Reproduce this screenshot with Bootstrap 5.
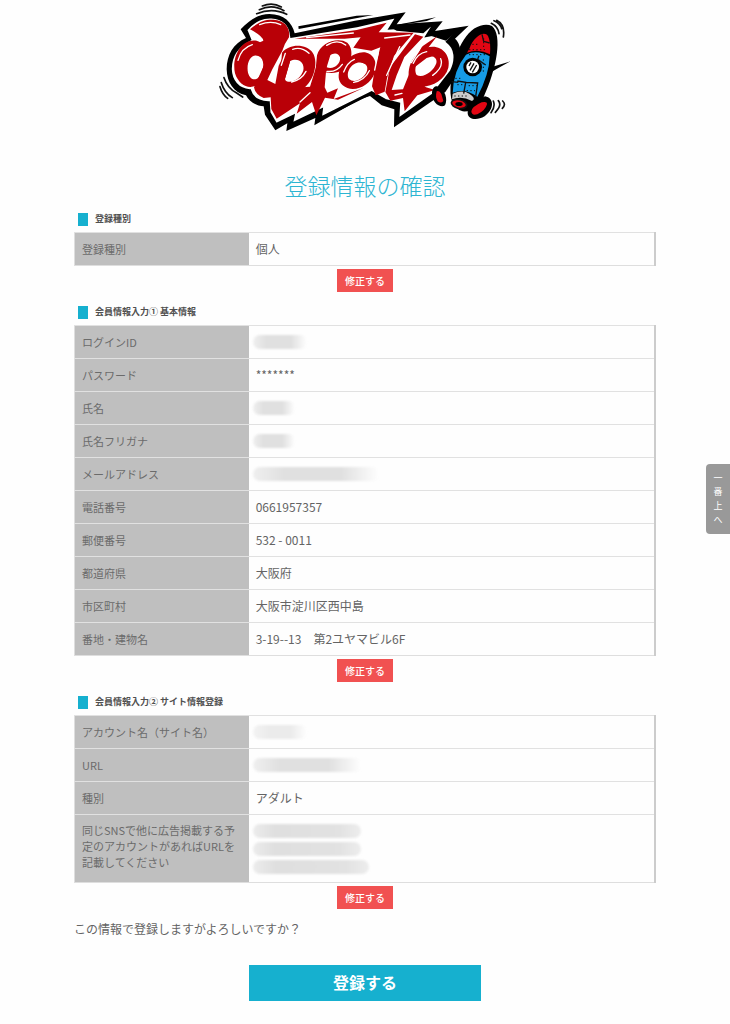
<!DOCTYPE html>
<html lang="ja">
<head>
<meta charset="utf-8">
<meta name="viewport" content="width=device-width, initial-scale=1">
<title>登録情報の確認</title>
<link rel="stylesheet" href="https://cdn.jsdelivr.net/npm/bootstrap@5.3.0/dist/css/bootstrap.min.css">
<style>
body{font-family:"Noto Sans CJK JP",sans-serif;font-size:12px;line-height:18px;color:#646464;background:#fefefe}
.page-body{width:80%;padding:0 1px}
.brand-logo{width:310px;height:140px}
.page-title{font-size:23px;line-height:32px;font-weight:300;color:#2db5d2;margin:29px 0 11px}
.section-title{font-size:9px;line-height:14px;font-weight:700;color:#505050;gap:7px;padding-left:4px;margin-bottom:6px}
.section-title::before{content:"";width:10px;height:13px;background:#16b0cf}
.info-table{width:100%;table-layout:fixed;border-collapse:collapse;border:1px solid #dedede;border-right:2px solid #ccc}
.info-table th{width:30%;background:#bfbfbf;color:#6b6b6b;font-size:11px;line-height:16px;font-weight:400;padding:8px 7px}
.info-table td{padding:7px 7px;line-height:18px}
.info-table tr{border-top:1px solid #e1e1e1}
.info-table .tall-row th{padding-top:7px;padding-bottom:12px}
.btn-fix{background:#f15151;color:#fff;border:0;border-radius:0;font-size:10px;line-height:15px;padding:4px 7px;width:56px;white-space:nowrap;font-weight:500}
.fix-row{margin:3px 0 13px}
.question{line-height:16px;margin-top:-1px}
.btn-send{width:40%;height:36px;background:#16b0cf;color:#fff;border:0;border-radius:0;font-size:16px;font-weight:700;line-height:24px;padding:3px 4px 5px}
.btn-fix:hover{background:#d94444;color:#fff}
.btn-send:hover{background:#119ab6;color:#fff}
.masked{display:block;height:14px;margin-left:-3px;border-radius:8px;background:linear-gradient(90deg,#efefef,#e0e0e0 25%,#e0e0e0 70%,#fefefe);filter:blur(1px)}
.masked.faint{background:linear-gradient(90deg,#f3f3f3,#ebebeb 30%,#ebebeb 70%,#fefefe)}
.masked.even{background:linear-gradient(90deg,#ececec,#dfdfdf 20%,#e2e2e2 80%,#ededed)}
.w-xs{width:42px}.w-sm{width:54px}.w-md{width:108px}.w-lg{width:116px}.w-xl{width:126px}
.to-top{position:fixed;right:0;top:464px;width:24px;height:70px;background:#999;color:#fff;border-radius:4px 0 0 4px;font-size:9px;line-height:14px;text-decoration:none}
</style>
</head>
<body>
<header class="text-center">
<svg class="brand-logo" viewBox="0 0 930 420" role="img" aria-label="appollo">
<path d="M92 88C125 53 152 42 178 42C222 42 246 67 254 100L435 62L587 37L560 73L698 64L675 93L776 77L735 116C755 132 757 178 744 220L706 276L552 382L553 328L515 316L480 288L450 298L313 376L316 354L229 393L232 370L196 391L165 344L161 319C137 318 116 303 108 286C70 278 51 247 50 208C50 165 70 130 108 114Z"/>
<path d="M265 79L440 47L490 45L266 87ZM574 72L678 52L650 63L586 73ZM835 204L901 184L865 204L838 220Z"/>
<path d="M107 89C137 56 160 50 184 51C223 53 242 77 245 109L440 77L563 49L541 84L671 75L652 106L748 88L713 125C739 144 741 180 724 214L669 285L563 360L566 312L525 301L485 278L331 355L334 330L244 373L249 349L198 374L177 338L175 308C145 307 125 294 119 272C83 270 62 242 61 209C60 169 82 137 119 118Z" fill="#fff" stroke="#000" stroke-width="9"/>
<path d="M668 75L640 100L600 96L560 92L545 84ZM748 88L708 122L664 108L690 97Z"/>
<g fill="#b90007">
<path d="M120 88C147 65 163 58 190 59C227 62 241 85 237 112Q224 130 217 152L187 208L172 240L196 252L206 197Q214 177 230 157L240 185L225 236L232 265L300 260L334 150L355 130L352 170L344 262L352 278L384 265L371 297L460 264L384 299L345 293L319 346L306 306L260 341L270 310L200 356L184 327L182 292L161 294Q136 284 132 262L165 190L160 160L143 130L160 122Q158 108 120 88Z"/>
<path fill-rule="evenodd" d="M140 122C175 132 180 190 160 232C140 276 90 268 75 220C64 170 95 114 140 122ZM145 168C123 159 108 188 114 218C122 246 145 243 154 218C164 196 161 174 145 168Z"/>
<path fill-rule="evenodd" d="M216 158C240 129 290 132 308 158C329 190 307 254 272 270C248 279 226 266 207 270ZM240 184L224 240C242 255 273 237 280 211C285 188 263 171 240 184Z"/>
<path fill-rule="evenodd" d="M321 166C331 128 383 109 412 128C434 149 425 195 398 211C378 221 358 220 345 216L336 250L310 280ZM361 166L350 202C372 210 393 191 390 172C386 157 369 158 361 166Z"/>
<path fill-rule="evenodd" d="M448 158C483 149 507 181 494 219C480 260 427 281 398 256C369 229 396 172 448 158ZM453 188C427 184 405 217 417 237C436 253 465 232 471 212C475 198 467 190 453 188Z"/>
<path d="M254 116L440 90L530 68L506 97L611 98L552 168L531 235L524 275L497 286L486 259L494 208L511 142L484 152L430 143L452 112L404 116Z"/>
<path d="M615 103L640 110L583 171L560 226L545 270L579 268L606 201L633 142L681 109L650 149L684 144L704 158L650 174L602 211L609 230L648 262L675 270L622 286L584 334L579 294L541 302L526 276L540 202Z"/>
<path fill-rule="evenodd" d="M646 144C690 128 724 162 715 203C703 247 650 269 610 255C582 233 597 165 646 144ZM651 167C627 168 608 202 620 225C640 237 671 213 679 190C683 174 670 166 651 167Z"/>
</g>
<g fill="none" stroke="#fff" stroke-width="4" stroke-linecap="round">
<path d="M149 74Q183 60 212 74M84 181Q94 144 127 134M248 148Q274 139 297 160M350 136Q382 116 407 135M401 216Q412 187 433 178M569 140L530 226M524 114L600 105M610 190Q622 160 650 155M692 176Q702 202 668 226M245 246Q275 239 288 214M351 214Q379 218 397 193M431 247Q464 241 478 212M290 113L430 99M505 158L494 210M226 160L214 196M640 130L604 188M270 306L300 278M555 285L576 280"/>
</g>
<g fill="none" stroke="#111" stroke-width="5" stroke-linecap="round">
<path d="M157 18Q187 5 214 21M148 29Q187 11 222 32M140 41Q188 22 230 43M42 233Q52 264 80 279L98 291M34 248Q43 278 67 293M30 260Q37 284 53 295M852 62Q870 69 875 86M844 70Q864 80 867 101M860 61Q886 74 880 111M850 303Q857 320 843 338M865 302Q877 316 856 337M878 303Q889 313 877 325"/>
</g>
<path d="M846 78C878 105 861 205 820 293Q800 337 758 334Q713 322 723 244C728 176 760 91 811 77Q831 71 846 78Z"/>
<path d="M681 259C707 269 714 299 705 316C693 326 664 310 666 277C668 264 673 259 681 259ZM774 315L825 289C853 294 854 327 824 349C801 363 774 359 773 340Z"/>
<path d="M778 146C792 108 823 91 834 108Q843 126 840 163Q806 144 771 158Z" fill="#e30613"/>
<path d="M768 164Q801 148 839 169Q838 224 802 290Q765 263 728 278Q730 211 768 164Z" fill="#169be5"/>
<path d="M728 281Q758 268 779 282T786 303Q755 286 726 298Z" fill="#ccc"/>
<ellipse cx="747" cy="312" rx="23" ry="13" fill="#e30613" stroke="#111" stroke-width="5" transform="rotate(12 747 312)"/>
<ellipse cx="747" cy="312" rx="11" ry="6"/>
<path d="M680 274Q688 270 694 282L700 303Q693 312 683 304Q675 291 680 274ZM784 334Q786 320 815 307Q832 303 831 313Q826 332 802 343Q785 348 784 334Z" fill="#e30613"/>
<path d="M816 103L821 124L839 129M742 243L767 247L761 281M767 247L803 249L797 290M807 167L803 178L827 195M725 245L745 247" fill="none" stroke="#111" stroke-width="4"/>
<path d="M777 149H832M777 164H830M736 235H755M742 254H757M776 257H800M770 272H795M820 178V218M733 288H775M787 133H807M821 115V144" fill="none" stroke="#111" stroke-width="3" stroke-dasharray="4 7"/>
<circle cx="788" cy="201" r="28"/><circle cx="788" cy="201" r="19" fill="#fff"/>
<path d="M780 211L792 190M787 217L800 195M777 198L783 187" stroke="#111" stroke-width="4" fill="none"/>
</svg>
</header>

<main class="page-body mx-auto">
<h1 class="page-title text-center">登録情報の確認</h1>

<section>
<h2 class="section-title d-flex align-items-center">登録種別</h2>
<table class="info-table">
<tr><th scope="row">登録種別</th><td>個人</td></tr>
</table>
<div class="fix-row text-center"><button type="button" class="btn btn-fix">修正する</button></div>
</section>

<section>
<h2 class="section-title d-flex align-items-center">会員情報入力① 基本情報</h2>
<table class="info-table">
<tr><th scope="row">ログインID</th><td><span class="masked w-sm"></span></td></tr>
<tr><th scope="row">パスワード</th><td>*******</td></tr>
<tr><th scope="row">氏名</th><td><span class="masked w-xs"></span></td></tr>
<tr><th scope="row">氏名フリガナ</th><td><span class="masked w-xs"></span></td></tr>
<tr><th scope="row">メールアドレス</th><td><span class="masked w-xl"></span></td></tr>
<tr><th scope="row">電話番号</th><td>0661957357</td></tr>
<tr><th scope="row">郵便番号</th><td>532 - 0011</td></tr>
<tr><th scope="row">都道府県</th><td>大阪府</td></tr>
<tr><th scope="row">市区町村</th><td>大阪市淀川区西中島</td></tr>
<tr><th scope="row">番地・建物名</th><td>3-19--13　第2ユヤマビル6F</td></tr>
</table>
<div class="fix-row text-center"><button type="button" class="btn btn-fix">修正する</button></div>
</section>

<section>
<h2 class="section-title d-flex align-items-center">会員情報入力② サイト情報登録</h2>
<table class="info-table">
<tr><th scope="row">アカウント名（サイト名）</th><td><span class="masked faint w-sm"></span></td></tr>
<tr><th scope="row">URL</th><td><span class="masked w-md"></span></td></tr>
<tr><th scope="row">種別</th><td>アダルト</td></tr>
<tr class="tall-row"><th scope="row">同じSNSで他に広告掲載する予定のアカウントがあればURLを記載してください</th>
<td><div class="d-grid gap-1"><span class="masked even w-md"></span><span class="masked even w-md"></span><span class="masked even w-lg"></span></div></td></tr>
</table>
<div class="fix-row text-center"><button type="button" class="btn btn-fix">修正する</button></div>
</section>

<form>
<p class="question mb-4 pb-1">この情報で登録しますがよろしいですか？</p>
<div class="text-center"><button type="submit" class="btn btn-send">登録する</button></div>
</form>
</main>

<a href="#" class="to-top d-flex flex-column align-items-center justify-content-center"><span>一</span><span>番</span><span>上</span><span>へ</span></a>
<script src="https://cdn.jsdelivr.net/npm/bootstrap@5.3.0/dist/js/bootstrap.bundle.min.js"></script>
</body>
</html>
